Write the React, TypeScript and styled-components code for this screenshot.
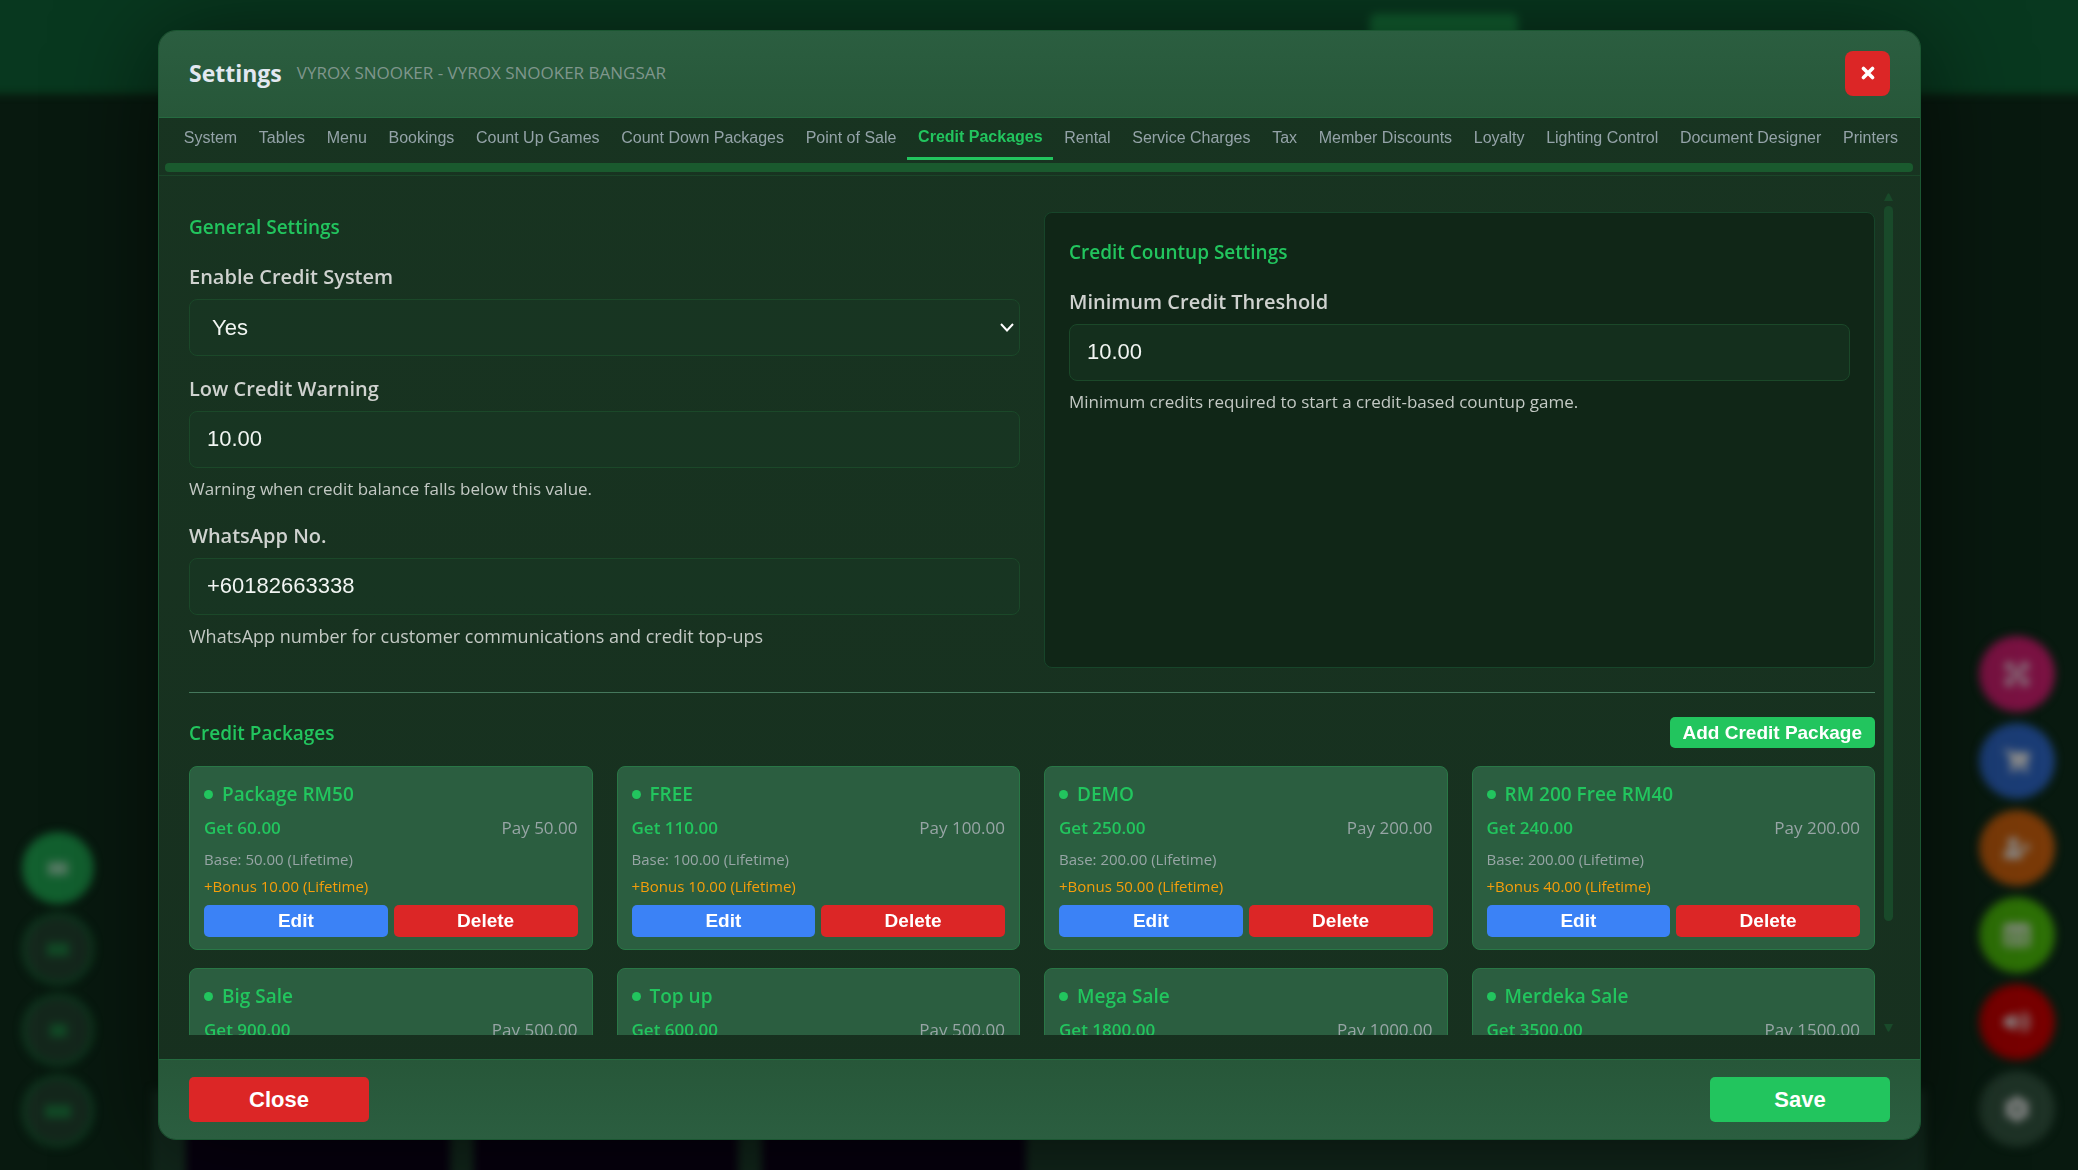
import React from "react";
import styled, { createGlobalStyle, css } from "styled-components";
import {
  FaCog,
  FaExpandArrowsAlt,
  FaShoppingCart,
  FaTable,
  FaUserPlus,
  FaVolumeUp,
} from "react-icons/fa";

const ui = `"Open Sans", "Noto Sans", sans-serif`;
const arial = `"Liberation Sans", Arial, sans-serif`;
const green = "#22c55e";
const red = "#dc2626";

const GlobalStyle = createGlobalStyle`
  *, *::before, *::after { box-sizing: border-box; }
  html, body, #root { height: 100%; }
  body {
    margin: 0;
    overflow: hidden;
    background: #08190f;
    font-family: ${ui};
    color: #ccd5cf;
  }
  h1, h2, h3, p { margin: 0; }
`;

/* ---------- dimmed application behind the dialog ---------- */

const Backdrop = styled.div`
  position: fixed;
  inset: -20px;
  overflow: hidden;
  display: flex;
  flex-direction: column;
  justify-content: space-between;
  filter: blur(4px);
`;

const AppBar = styled.div`
  height: 114px;
  padding: 34px 0 0 1390px;
  background: #08381f;
  border-bottom: 2px solid #0a3c1a;
`;

const AppBarButton = styled.div`
  width: 148px;
  height: 50px;
  border-radius: 6px;
  background: #116030;
`;

const TableStrip = styled.div`
  height: 100px;
  margin: 0 172px;
  padding: 0 34px;
  display: flex;
  gap: 24px;
  background: #12281c;
`;

const TableTile = styled.div`
  width: 264px;
  background: #07000f;
`;

const SideRail = styled.div<{ $side: "left" | "right" }>`
  position: fixed;
  bottom: 23px;
  ${(p) => p.$side}: ${(p) => (p.$side === "left" ? "22px" : "23px")};
  display: flex;
  flex-direction: column;
  gap: ${(p) => (p.$side === "left" ? "9px" : "11px")};
  filter: blur(4px);
`;

const FilterDot = styled.div<{ $active?: boolean }>`
  width: 72px;
  height: 72px;
  border-radius: 50%;
  display: grid;
  place-items: center;
  background: ${(p) => (p.$active ? "#12602f" : "#14271c")};
  border: 4px solid ${(p) => (p.$active ? "#12602f" : "#0f3d21")};
`;

const FilterMark = styled.span<{ $active?: boolean; $width: number }>`
  width: ${(p) => p.$width}px;
  height: 13px;
  background: ${(p) => (p.$active ? "#557a63" : "#124a26")};
`;

const ActionDot = styled.div<{ $color: string }>`
  width: 76px;
  height: 76px;
  border-radius: 50%;
  display: grid;
  place-items: center;
  background: ${(p) => p.$color};
  color: #8c8c8c;
  font-size: 26px;
`;

/* ---------- dialog ---------- */

const Overlay = styled.div`
  position: relative;
  height: 100vh;
  padding: 30px 157px 30px 158px;
  display: flex;
`;

const Dialog = styled.section`
  flex: 1;
  min-width: 0;
  display: flex;
  flex-direction: column;
  overflow: hidden;
  border: 1px solid #1b5732;
  border-radius: 18px;
  background: linear-gradient(180deg, #183421, #17301f);
  box-shadow: 0 10px 100px rgba(0, 0, 0, 0.6);
`;

const Header = styled.header`
  flex: none;
  height: 87px;
  padding: 0 30px 2px;
  display: flex;
  align-items: center;
  justify-content: space-between;
  background: linear-gradient(180deg, #2b5e40, #275739);
  border-bottom: 1px solid #256b40;
`;

const TitleGroup = styled.div`
  display: flex;
  align-items: center;
  gap: 15px;
`;

const Title = styled.h1`
  font-size: 23px;
  line-height: 32px;
  font-weight: 700;
  color: #e2e8f0;
`;

const Venue = styled.span`
  font-size: 17px;
  line-height: 24px;
  color: #7f968c;
`;

const buttonBase = css`
  border: 0;
  padding: 0;
  border-radius: 5px;
  color: #fff;
  font-family: ${arial};
  font-weight: 700;
  cursor: pointer;
`;

const CloseIcon = styled.button`
  ${buttonBase}
  width: 45px;
  height: 45px;
  border-radius: 8px;
  display: grid;
  place-items: center;
  background: ${red};
`;

const TabStrip = styled.div`
  flex: none;
  padding: 0 7px 3px 6px;
  border-bottom: 1px solid #1b4529;
`;

const Tabs = styled.nav`
  display: flex;
  padding: 0 4px 0 8px;
`;

const Tab = styled.button<{ $active?: boolean }>`
  flex: 1 1 auto;
  height: 42px;
  padding: ${(p) => (p.$active ? "0 10px 2px" : "0 10px")};
  border: 0;
  border-bottom: 3px solid ${(p) => (p.$active ? green : "transparent")};
  background: none;
  color: ${(p) => (p.$active ? green : "#94a3a8")};
  font-family: ${arial};
  font-size: 16px;
  font-weight: ${(p) => (p.$active ? 700 : 400)};
  white-space: nowrap;
  cursor: pointer;
`;

const TabScroll = styled.div`
  height: 9px;
  margin-top: 3px;
  border-radius: 4px;
  background: #1a5a2e;
`;

const Body = styled.div`
  flex: 1;
  min-height: 0;
  padding: 12px 27px 24px 30px;
  display: flex;
  gap: 9px;
`;

const ScrollArea = styled.div`
  flex: 1;
  min-width: 0;
  padding-top: 24px;
  overflow: hidden;
`;

const ScrollBar = styled.div`
  width: 9px;
  padding: 5px 0 3px;
  display: flex;
  flex-direction: column;
  justify-content: space-between;
  align-items: center;
`;

const ScrollTrack = styled.div`
  flex: 1;
  width: 100%;
  margin: 5px 0;
`;

const ScrollThumb = styled.div`
  height: 88%;
  border-radius: 5px;
  background: #194a2a;
`;

const Columns = styled.div`
  display: grid;
  grid-template-columns: 1fr 1fr;
  gap: 24px;
  padding-bottom: 24px;
  border-bottom: 1px solid #45785c;
`;

const Group = styled.section<{ $boxed?: boolean }>`
  > h2 {
    margin-bottom: 20px;
  }

  ${(p) =>
    p.$boxed &&
    css`
      padding: 24px;
      border: 1px solid #17452a;
      border-radius: 8px;
      background: #102617;
    `}
`;

const SectionTitle = styled.h2`
  font-size: 19px;
  line-height: 30px;
  font-weight: 600;
  color: ${green};
`;

const Field = styled.div`
  display: flex;
  flex-direction: column;
  padding-bottom: 18px;
`;

const Label = styled.label`
  font-size: 20px;
  line-height: 30px;
  font-weight: 600;
  color: #cfd2cf;
`;

const control = css`
  width: 100%;
  height: 57px;
  margin-top: 7px;
  border: 1px solid #1b4829;
  border-radius: 8px;
  background: rgba(24, 56, 36, 0.5);
  color: #f1f5f2;
  font-family: ${arial};
  font-size: 22px;
`;

const TextInput = styled.input`
  ${control}
  padding: 0 17px 2px;
`;

const SelectBox = styled.div`
  display: grid;
  align-items: center;

  > * {
    grid-area: 1 / 1;
  }
`;

const Select = styled.select`
  ${control}
  appearance: none;
  padding: 0 22px;
`;

const Chevron = styled.svg`
  justify-self: end;
  margin: 7px 6px 0 0;
  pointer-events: none;
`;

const Help = styled.p<{ $large?: boolean }>`
  padding-top: 7px;
  font-size: ${(p) => (p.$large ? 18 : 17)}px;
  line-height: 28px;
  color: #c3c9c4;
`;

const PackagesHead = styled.div`
  display: flex;
  align-items: center;
  justify-content: space-between;
  padding: 24px 0 18px;
`;

const AddButton = styled.button`
  ${buttonBase}
  height: 31px;
  padding: 0 13px;
  background: ${green};
  font-size: 19px;
`;

const CardGrid = styled.div`
  display: grid;
  grid-template-columns: repeat(4, 1fr);
  gap: 18px 24px;
`;

const Card = styled.article`
  padding: 12px 14px;
  border: 1px solid #297746;
  border-radius: 8px;
  background: #2b5e40;
`;

const CardTitle = styled.h3`
  display: flex;
  align-items: center;
  gap: 9px;
  font-size: 19px;
  line-height: 30px;
  font-weight: 600;
  color: ${green};

  &::before {
    content: "";
    width: 9px;
    height: 9px;
    border-radius: 50%;
    background: ${green};
  }
`;

const PriceRow = styled.div`
  display: flex;
  justify-content: space-between;
  padding: 6px 0 5px;
  font-size: 17px;
  line-height: 26px;
`;

const Get = styled.strong`
  font-weight: 600;
  color: ${green};
`;

const Pay = styled.span`
  color: #97a5a5;
`;

const Detail = styled.p<{ $bonus?: boolean }>`
  font-size: 15px;
  line-height: 27px;
  color: ${(p) => (p.$bonus ? "#f59e0b" : "#97a5a5")};
`;

const CardActions = styled.div`
  display: grid;
  grid-template-columns: 1fr 1fr;
  gap: 6px;
  padding-top: 5px;
`;

const CardButton = styled.button<{ $color: string }>`
  ${buttonBase}
  height: 32px;
  background: ${(p) => p.$color};
  font-size: 19px;
`;

const Footer = styled.footer`
  flex: none;
  height: 80px;
  padding: 0 30px;
  display: flex;
  align-items: center;
  justify-content: space-between;
  background: linear-gradient(180deg, #275739, #2b5e40);
  border-top: 1px solid #256b40;
`;

const FooterButton = styled.button<{ $color: string }>`
  ${buttonBase}
  width: 180px;
  height: 45px;
  background: ${(p) => p.$color};
  font-size: 22px;
`;

/* ---------- data ---------- */

const tabs = [
  "System",
  "Tables",
  "Menu",
  "Bookings",
  "Count Up Games",
  "Count Down Packages",
  "Point of Sale",
  "Credit Packages",
  "Rental",
  "Service Charges",
  "Tax",
  "Member Discounts",
  "Loyalty",
  "Lighting Control",
  "Document Designer",
  "Printers",
];

const packages = [
  { name: "Package RM50", get: "60.00", pay: "50.00", bonus: "10.00" },
  { name: "FREE", get: "110.00", pay: "100.00", bonus: "10.00" },
  { name: "DEMO", get: "250.00", pay: "200.00", bonus: "50.00" },
  { name: "RM 200 Free RM40", get: "240.00", pay: "200.00", bonus: "40.00" },
  { name: "Big Sale", get: "900.00", pay: "500.00" },
  { name: "Top up", get: "600.00", pay: "500.00" },
  { name: "Mega Sale", get: "1800.00", pay: "1000.00" },
  { name: "Merdeka Sale", get: "3500.00", pay: "1500.00" },
];

const Arrow = ({ down }: { down?: boolean }) => (
  <svg width="9" height="8" viewBox="0 0 9 8" aria-hidden="true">
    <path d={down ? "M0 0H9L5.500 7Q4.500 8.500 3.500 7Z" : "M0 8H9L5.500 1Q4.500 -.5 3.500 1Z"} fill="#194a2a" />
  </svg>
);

export default function App() {
  return (
    <>
      <GlobalStyle />
      <Backdrop aria-hidden="true">
        <AppBar>
          <AppBarButton />
        </AppBar>
        <TableStrip>
          <TableTile />
          <TableTile />
          <TableTile />
        </TableStrip>
      </Backdrop>
      <SideRail $side="left" aria-hidden="true">
        {[20, 22, 17, 26].map((width, i) => (
          <FilterDot key={width} $active={i === 0}>
            <FilterMark $active={i === 0} $width={width} />
          </FilterDot>
        ))}
      </SideRail>
      <SideRail $side="right" aria-hidden="true">
        <ActionDot $color="#7a1242"><FaExpandArrowsAlt /></ActionDot>
        <ActionDot $color="#1b3d76"><FaShoppingCart /></ActionDot>
        <ActionDot $color="#7a3a08"><FaUserPlus /></ActionDot>
        <ActionDot $color="#2d7006"><FaTable /></ActionDot>
        <ActionDot $color="#780000"><FaVolumeUp /></ActionDot>
        <ActionDot $color="#1e3226"><FaCog /></ActionDot>
      </SideRail>

      <Overlay>
        <Dialog role="dialog" aria-labelledby="dialog-title">
          <Header>
            <TitleGroup>
              <Title id="dialog-title">Settings</Title>
              <Venue>VYROX SNOOKER - VYROX SNOOKER BANGSAR</Venue>
            </TitleGroup>
            <CloseIcon type="button" aria-label="Close settings">
              <svg width="14" height="14" viewBox="0 0 14 14" fill="none" stroke="#fff" strokeWidth="3.600" strokeLinecap="round">
                <path d="M2.500 2.500 11.500 11.500M11.500 2.500 2.500 11.500" />
              </svg>
            </CloseIcon>
          </Header>

          <TabStrip>
            <Tabs>
              {tabs.map((name) => (
                <Tab key={name} type="button" $active={name === "Credit Packages"}>
                  {name}
                </Tab>
              ))}
            </Tabs>
            <TabScroll />
          </TabStrip>

          <Body>
            <ScrollArea>
              <Columns>
                <Group>
                  <SectionTitle>General Settings</SectionTitle>
                  <Field>
                    <Label htmlFor="enabled">Enable Credit System</Label>
                    <SelectBox>
                      <Select id="enabled" defaultValue="Yes">
                        <option>Yes</option>
                        <option>No</option>
                      </Select>
                      <Chevron width="14" height="9" viewBox="0 0 14 9" fill="none" stroke="#fff" strokeWidth="2">
                        <path d="M1 1 7 7.500 13 1" />
                      </Chevron>
                    </SelectBox>
                  </Field>
                  <Field>
                    <Label htmlFor="low-credit">Low Credit Warning</Label>
                    <TextInput id="low-credit" defaultValue="10.00" />
                    <Help>Warning when credit balance falls below this value.</Help>
                  </Field>
                  <Field>
                    <Label htmlFor="whatsapp">WhatsApp No.</Label>
                    <TextInput id="whatsapp" defaultValue="+60182663338" />
                    <Help $large>WhatsApp number for customer communications and credit top-ups</Help>
                  </Field>
                </Group>
                <Group $boxed>
                  <SectionTitle>Credit Countup Settings</SectionTitle>
                  <Field>
                    <Label htmlFor="threshold">Minimum Credit Threshold</Label>
                    <TextInput id="threshold" defaultValue="10.00" />
                    <Help>Minimum credits required to start a credit-based countup game.</Help>
                  </Field>
                </Group>
              </Columns>

              <PackagesHead>
                <SectionTitle>Credit Packages</SectionTitle>
                <AddButton type="button">Add Credit Package</AddButton>
              </PackagesHead>
              <CardGrid>
                {packages.map((item) => (
                  <Card key={item.name}>
                    <CardTitle>{item.name}</CardTitle>
                    <PriceRow>
                      <Get>Get {item.get}</Get>
                      <Pay>Pay {item.pay}</Pay>
                    </PriceRow>
                    {item.bonus && (
                      <>
                        <Detail>Base: {item.pay} (Lifetime)</Detail>
                        <Detail $bonus>+Bonus {item.bonus} (Lifetime)</Detail>
                        <CardActions>
                          <CardButton type="button" $color="#3b82f6">Edit</CardButton>
                          <CardButton type="button" $color={red}>Delete</CardButton>
                        </CardActions>
                      </>
                    )}
                  </Card>
                ))}
              </CardGrid>
            </ScrollArea>
            <ScrollBar aria-hidden="true">
              <Arrow />
              <ScrollTrack>
                <ScrollThumb />
              </ScrollTrack>
              <Arrow down />
            </ScrollBar>
          </Body>

          <Footer>
            <FooterButton type="button" $color={red}>Close</FooterButton>
            <FooterButton type="button" $color={green}>Save</FooterButton>
          </Footer>
        </Dialog>
      </Overlay>
    </>
  );
}
